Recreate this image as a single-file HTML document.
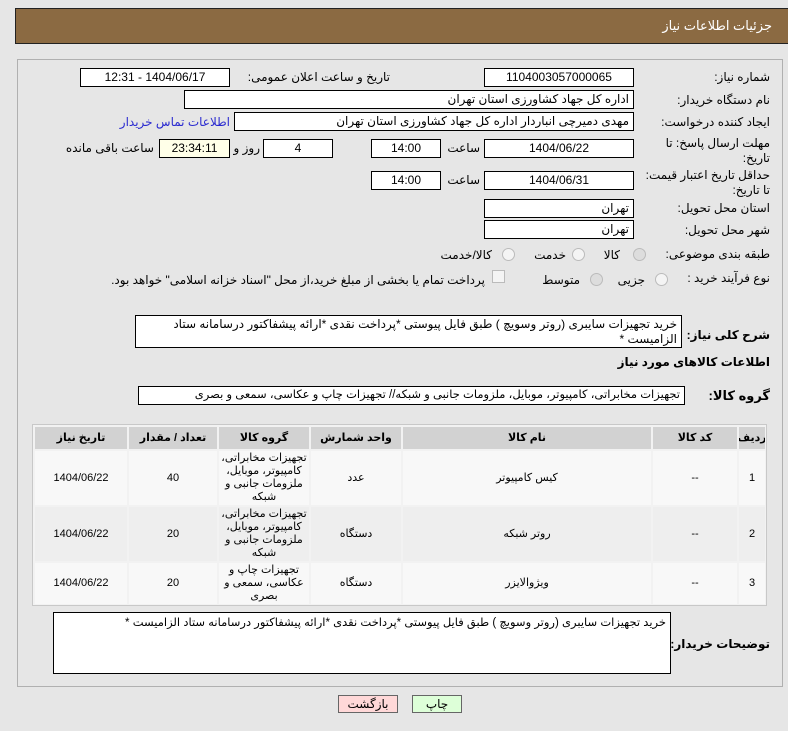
<!DOCTYPE html>
<html><head><meta charset="utf-8"><style>
body{margin:0;width:788px;height:731px;background:#e6e6e6;font-family:"Liberation Sans","DejaVu Sans",sans-serif;font-size:12px;color:#000;position:relative;overflow:hidden;direction:rtl}
.a{position:absolute;white-space:nowrap}
.hdr{left:15px;top:8px;width:780px;height:34px;background:#8b6a42;border:1px solid #222;}
.hdr span{position:absolute;right:24px;top:9px;color:#fff;font-size:13px}
.panel{left:17px;top:59px;width:764px;height:626px;border:1px solid #b0b0b0;background:#e6e6e6}
.box{position:absolute;background:#fff;border:1px solid #000;box-sizing:border-box;height:19px;line-height:17px;font-size:12px;padding:0 4px;white-space:nowrap;overflow:hidden}
.c{text-align:center}
.l{font-size:12px}
.rad{position:absolute;width:11px;height:11px;border-radius:50%;border:1px solid #bbb;background:#f4f4f4}
.tb{position:absolute;left:32px;top:424px;width:735px;height:182px;background:#f2f2f2;border:1px solid #c8c8c8;box-sizing:border-box}
.cell{position:absolute;display:flex;align-items:center;justify-content:center;text-align:center;font-size:11px;line-height:13px;overflow:hidden}
.th{background:#d2d2d2;font-weight:bold;top:2px;height:22px}
.btn{position:absolute;top:695px;height:18px;border:1px solid #666;box-sizing:border-box;text-align:center;line-height:16px;font-size:12px}
</style></head><body>
<div class="a hdr"><span>جزئیات اطلاعات نیاز</span></div>
<div class="a panel"></div>

<div class="a l" style="right:18px;top:70px">شماره نیاز:</div>
<div class="box c" style="left:484px;top:68px;width:150px">1104003057000065</div>
<div class="a l" style="right:398px;top:70px">تاریخ و ساعت اعلان عمومی:</div>
<div class="box c" style="left:80px;top:68px;width:150px">1404/06/17 - 12:31</div>

<div class="a l" style="right:18px;top:93px">نام دستگاه خریدار:</div>
<div class="box" style="left:184px;top:90px;width:450px">اداره کل جهاد کشاورزی استان تهران</div>

<div class="a l" style="right:18px;top:115px">ایجاد کننده درخواست:</div>
<div class="box" style="left:234px;top:112px;width:400px">مهدی  دمیرچی انباردار اداره کل جهاد کشاورزی استان تهران</div>
<div class="a l" style="right:558px;top:115px;color:#2a2ad0">اطلاعات تماس خریدار</div>

<div class="a l" style="right:18px;top:136px;line-height:15px;white-space:normal;width:125px">مهلت ارسال پاسخ: تا تاریخ:</div>
<div class="box c" style="left:484px;top:139px;width:150px">1404/06/22</div>
<div class="a l" style="right:308px;top:141px">ساعت</div>
<div class="box c" style="left:371px;top:139px;width:70px">14:00</div>
<div class="box c" style="left:263px;top:139px;width:70px">4</div>
<div class="a l" style="right:528px;top:141px">روز و</div>
<div class="box c" style="left:159px;top:139px;width:71px;background:#ffffe8">23:34:11</div>
<div class="a l" style="right:634px;top:141px">ساعت باقی مانده</div>

<div class="a l" style="right:18px;top:168px;line-height:15px;white-space:normal;width:130px">حداقل تاریخ اعتبار قیمت: تا تاریخ:</div>
<div class="box c" style="left:484px;top:171px;width:150px">1404/06/31</div>
<div class="a l" style="right:308px;top:173px">ساعت</div>
<div class="box c" style="left:371px;top:171px;width:70px">14:00</div>

<div class="a l" style="right:18px;top:201px">استان محل تحویل:</div>
<div class="box" style="left:484px;top:199px;width:150px">تهران</div>
<div class="a l" style="right:18px;top:223px">شهر محل تحویل:</div>
<div class="box" style="left:484px;top:220px;width:150px">تهران</div>

<div class="a l" style="right:18px;top:247px">طبقه بندی موضوعی:</div>
<div class="rad" style="left:633px;top:248px;background:#ddd"></div><div class="a l" style="right:168px;top:248px">کالا</div>
<div class="rad" style="left:572px;top:248px"></div><div class="a l" style="right:222px;top:248px">خدمت</div>
<div class="rad" style="left:502px;top:248px"></div><div class="a l" style="right:296px;top:248px">کالا/خدمت</div>

<div class="a l" style="right:18px;top:271px">نوع فرآیند خرید :</div>
<div class="rad" style="left:655px;top:273px"></div><div class="a l" style="right:143px;top:273px">جزیی</div>
<div class="rad" style="left:590px;top:273px;background:#ddd"></div><div class="a l" style="right:208px;top:273px">متوسط</div>
<div class="a" style="left:492px;top:270px;width:11px;height:11px;border:1px solid #bbb;background:#f4f4f4"></div>
<div class="a l" style="right:303px;top:273px">پرداخت تمام یا بخشی از مبلغ خرید،از محل "اسناد خزانه اسلامی" خواهد بود.</div>

<div class="a l" style="right:18px;top:328px;font-weight:bold">شرح کلی نیاز:</div>
<div class="box" style="left:135px;top:315px;width:547px;height:33px;white-space:normal;line-height:15px;padding-top:1px;font-size:12px">خرید تجهیزات سایبری (روتر وسویچ ) طبق فایل پیوستی *پرداخت نقدی *ارائه پیشفاکتور درسامانه ستاد الزامیست *</div>

<div class="a" style="right:18px;top:355px;font-weight:bold;font-size:12px">اطلاعات کالاهای مورد نیاز</div>

<div class="a" style="right:18px;top:388px;font-weight:bold;font-size:13px">گروه کالا:</div>
<div class="box" style="left:138px;top:386px;width:547px;font-size:11.5px">تجهیزات مخابراتی، کامپیوتر، موبایل، ملزومات جانبی و شبکه// تجهیزات چاپ و عکاسی، سمعی و بصری</div>

<div class="tb">
<div class="cell th" style="left:706px;width:26px">ردیف</div>
<div class="cell th" style="left:620px;width:84px">کد کالا</div>
<div class="cell th" style="left:370px;width:248px">نام کالا</div>
<div class="cell th" style="left:278px;width:90px">واحد شمارش</div>
<div class="cell th" style="left:186px;width:90px">گروه کالا</div>
<div class="cell th" style="left:96px;width:88px">تعداد / مقدار</div>
<div class="cell th" style="left:2px;width:92px">تاریخ نیاز</div>

<div class="cell" style="left:706px;width:26px;top:26px;height:54px;background:#f8f8f8">1</div>
<div class="cell" style="left:620px;width:84px;top:26px;height:54px;background:#f8f8f8">--</div>
<div class="cell" style="left:370px;width:248px;top:26px;height:54px;background:#f8f8f8">کیس کامپیوتر</div>
<div class="cell" style="left:278px;width:90px;top:26px;height:54px;background:#f8f8f8">عدد</div>
<div class="cell" style="left:186px;width:90px;top:26px;height:54px;background:#f8f8f8">تجهیزات مخابراتی، کامپیوتر، موبایل، ملزومات جانبی و شبکه</div>
<div class="cell" style="left:96px;width:88px;top:26px;height:54px;background:#f8f8f8">40</div>
<div class="cell" style="left:2px;width:92px;top:26px;height:54px;background:#f8f8f8">1404/06/22</div>

<div class="cell" style="left:706px;width:26px;top:82px;height:54px;background:#eeeeee">2</div>
<div class="cell" style="left:620px;width:84px;top:82px;height:54px;background:#eeeeee">--</div>
<div class="cell" style="left:370px;width:248px;top:82px;height:54px;background:#eeeeee">روتر شبکه</div>
<div class="cell" style="left:278px;width:90px;top:82px;height:54px;background:#eeeeee">دستگاه</div>
<div class="cell" style="left:186px;width:90px;top:82px;height:54px;background:#eeeeee">تجهیزات مخابراتی، کامپیوتر، موبایل، ملزومات جانبی و شبکه</div>
<div class="cell" style="left:96px;width:88px;top:82px;height:54px;background:#eeeeee">20</div>
<div class="cell" style="left:2px;width:92px;top:82px;height:54px;background:#eeeeee">1404/06/22</div>

<div class="cell" style="left:706px;width:26px;top:138px;height:41px;background:#f8f8f8">3</div>
<div class="cell" style="left:620px;width:84px;top:138px;height:41px;background:#f8f8f8">--</div>
<div class="cell" style="left:370px;width:248px;top:138px;height:41px;background:#f8f8f8">ویژوالایزر</div>
<div class="cell" style="left:278px;width:90px;top:138px;height:41px;background:#f8f8f8">دستگاه</div>
<div class="cell" style="left:186px;width:90px;top:138px;height:41px;background:#f8f8f8">تجهیزات چاپ و عکاسی، سمعی و بصری</div>
<div class="cell" style="left:96px;width:88px;top:138px;height:41px;background:#f8f8f8">20</div>
<div class="cell" style="left:2px;width:92px;top:138px;height:41px;background:#f8f8f8">1404/06/22</div>
</div>

<div class="a" style="right:18px;top:637px;font-weight:bold;font-size:12px">توضیحات خریدار:</div>
<div class="box" style="left:53px;top:612px;width:618px;height:62px;white-space:normal;padding-top:2px;font-size:11.5px">خرید تجهیزات سایبری (روتر وسویچ ) طبق فایل پیوستی *پرداخت نقدی *ارائه پیشفاکتور درسامانه ستاد الزامیست *</div>

<div class="btn" style="left:338px;width:60px;background:#ffd8d8">بازگشت</div>
<div class="btn" style="left:412px;width:50px;background:#ddffd8">چاپ</div>
</body></html>
